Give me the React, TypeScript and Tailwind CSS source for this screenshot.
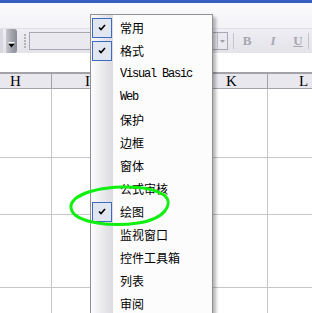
import React from 'react';

const cols = ['H', 'I', '', 'K', 'L'];
const rowHeights = [69, 57, 73, 40];

const items: { label: string; checked?: boolean; latin?: boolean }[] = [
  { label: '常用', checked: true },
  { label: '格式', checked: true },
  { label: 'Visual Basic', latin: true },
  { label: 'Web', latin: true },
  { label: '保护' },
  { label: '边框' },
  { label: '窗体' },
  { label: '公式审核' },
  { label: '绘图', checked: true },
  { label: '监视窗口' },
  { label: '控件工具箱' },
  { label: '列表' },
  { label: '审阅' },
];

const CheckBox = () => (
  <div className="w-[20px] h-[20px] ml-[1px] border border-[#3c6bc0] bg-[#e2e6f1] flex items-center justify-center">
    <svg width="8" height="7" viewBox="0 0 8 7">
      <path d="M1 3.5 L3 5.5 L7 1" fill="none" stroke="#000" strokeWidth="1.6" />
    </svg>
  </div>
);

const App: React.FC = () => {
  return (
    <div className="relative w-[312px] h-[313px] overflow-hidden bg-white" style={{ fontFamily: '"Noto Sans CJK SC", sans-serif' }}>
      {/* Title bar edge */}
      <div className="h-[3px] bg-[#3560c0]"></div>
      <div className="h-[25px] bg-gradient-to-b from-[#fbfbfd] to-[#f3f3f7]"></div>

      {/* Toolbar */}
      <div className="h-[25px] flex items-center bg-gradient-to-b from-[#efeef4] to-[#e4e3ea] border-t border-[#e0e0e6]">
        <div className="w-[3px] h-full bg-[#d8d8de] mr-[3px]"></div>
        <div className="w-[11px] h-full rounded-r-[3px] bg-gradient-to-r from-[#c8c8d0] via-[#a4a4ae] to-[#8c8c96] flex items-end justify-center pb-[5px]">
          <svg width="7" height="6" viewBox="0 0 7 6">
            <rect x="0.5" y="0" width="6" height="1" fill="#fff" />
            <path d="M0.5 2 L6.5 2 L3.5 5.5 Z" fill="#000" />
          </svg>
        </div>
        <div className="ml-[7px] flex flex-col gap-[1px]">
          {[0, 1, 2, 3, 4].map((i) => (
            <div key={i} className="w-[2px] h-[2px] bg-[#b4b4bc]"></div>
          ))}
        </div>
        <div className="ml-[3px] w-[199px] h-[18px] border border-[#a8a8b0] bg-[#e9e9ef] flex justify-end">
          <div className="w-[10px] h-full border-l border-[#c4c4cc] flex items-center justify-center">
            <svg width="5" height="3" viewBox="0 0 5 3">
              <path d="M0 0 L5 0 L2.5 3 Z" fill="#a0a0a8" />
            </svg>
          </div>
        </div>
        <div className="ml-[5px] w-[1px] h-[16px] bg-[#c4c4cc]"></div>
        <div className="ml-[5px] w-[16px] text-center text-[13px] font-bold text-[#a7a7b0]" style={{ fontFamily: '"Liberation Serif", serif' }}>B</div>
        <div className="ml-[10px] w-[16px] text-center text-[13px] italic font-bold text-[#a7a7b0]" style={{ fontFamily: '"Liberation Serif", serif' }}>I</div>
        <div className="ml-[9px] w-[16px] text-center text-[13px] font-bold underline text-[#a7a7b0]" style={{ fontFamily: '"Liberation Serif", serif' }}>U</div>
        <div className="ml-[2px] w-[1px] h-[16px] bg-[#c4c4cc]"></div>
      </div>

      <div className="h-[19px] bg-white"></div>

      {/* Column headers */}
      <div className="flex ml-[-20px] h-[17px] border-t-2 border-b border-[#a2a2a8] bg-[#e9e8ef]">
        {cols.map((c, i) => (
          <div
            key={i}
            className="w-[72px] shrink-0 border-r border-[#a2a2a8] flex items-center justify-center text-[15px] leading-none text-black"
            style={{ fontFamily: '"Liberation Serif", serif' }}
          >
            {c}
          </div>
        ))}
      </div>

      {/* Grid */}
      {rowHeights.map((h, r) => (
        <div key={r} className="flex ml-[-20px] border-b border-[#c6c6c6]" style={{ height: h }}>
          {cols.map((c, i) => (
            <div key={i} className="w-[72px] shrink-0 border-r border-[#c6c6c6]"></div>
          ))}
        </div>
      ))}

      {/* Context menu */}
      <div className="absolute left-[90px] top-[14px] w-[123px] h-[310px] border border-[#8f8f94] bg-[#fcfcfc] shadow-[3px_3px_3px_rgba(0,0,0,0.28)]">
        <div className="absolute left-0 top-0 bottom-0 w-[22px] bg-gradient-to-r from-[#fdfdfe] to-[#dadae0]"></div>
        <div className="relative pt-[1px] flex flex-col">
          {items.map((it) => (
            <div key={it.label} className="h-[23px] flex items-center">
              <div className="w-[29px] shrink-0 flex items-center">{it.checked && <CheckBox />}</div>
              <span
                className={it.latin ? 'text-[12px] tracking-[-1.2px] text-black leading-none' : 'text-[12px] text-black leading-none'}
                style={it.latin ? { fontFamily: '"Liberation Mono", monospace' } : undefined}
              >
                {it.label}
              </span>
            </div>
          ))}
        </div>
      </div>

      {/* Green annotation ellipse */}
      <svg className="absolute left-[68px] top-[183px] pointer-events-none" width="104" height="45" viewBox="0 0 104 45">
        <path
          d="M10 14 C 30 2, 78 0, 96 12 C 106 20, 98 36, 70 40 C 44 44, 10 40, 4 28 C 0 20, 8 12, 24 8"
          fill="none"
          stroke="#10f010"
          strokeWidth="3"
          strokeLinecap="round"
        />
      </svg>
    </div>
  );
};

export default App;
